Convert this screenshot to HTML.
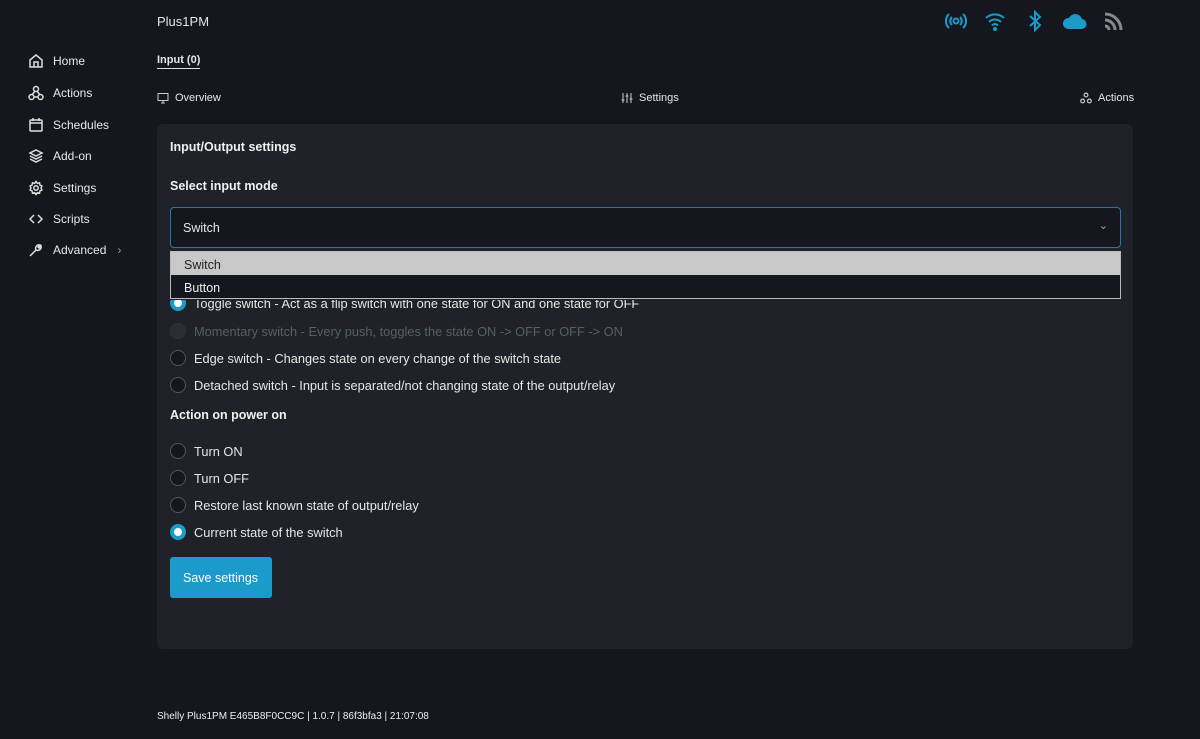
<!DOCTYPE html>
<html><head><meta charset="utf-8"><style>
*{box-sizing:border-box;margin:0;padding:0}
body{width:1200px;height:739px;background:#14181e;color:#e6e6e6;font-family:"Liberation Sans",sans-serif;font-size:12.5px;position:relative;overflow:hidden}
.a{position:absolute;white-space:nowrap}
.nav{left:28px;display:flex;align-items:center;gap:9px;font-size:12px;color:#e8e8e8}
.nav svg{width:16px;height:16px;stroke:#ddd;fill:none;stroke-width:1.5}
.card{left:157px;top:124px;width:976px;height:525px;background:#1f2329;border-radius:6px}
.h{font-weight:bold;font-size:12.5px;color:#f0f0f0}
.r{left:170px;display:flex;align-items:center;gap:8px;font-size:12.8px}
.r i{display:inline-block;width:16px;height:16px;border-radius:50%;border:1px solid #555;background:#14181e}
.r i.on{background:#fff;border:4px solid #1a9bcb}
.ic{stroke:#1a9bcb;fill:none;stroke-width:2}
</style></head><body>
<div class="a" style="left:157px;top:14px;font-size:13px">Plus1PM</div>
<svg class="a ic" style="left:945px;top:11px" width="22" height="20" viewBox="0 0 22 20"><circle cx="11" cy="10" r="2.5"/><path d="M7 6a5.5 5.5 0 0 0 0 8M15 6a5.5 5.5 0 0 1 0 8M4 3a9.5 9.5 0 0 0 0 14M18 3a9.5 9.5 0 0 1 0 14"/></svg>
<svg class="a ic" style="left:984px;top:11px" width="22" height="20" viewBox="0 0 22 20"><path d="M2 7a13 13 0 0 1 18 0M5 11a8.5 8.5 0 0 1 12 0M8 14.5a4 4 0 0 1 6 0"/><circle cx="11" cy="18" r="1" fill="#1a9bcb"/></svg>
<svg class="a ic" style="left:1027px;top:10px" width="16" height="22" viewBox="0 0 16 22"><path d="M3 6l10 9-5 5V2l5 5-10 9"/></svg>
<svg class="a" style="left:1062px;top:11px" width="25" height="19" viewBox="0 0 25 19"><path d="M6 18h13a5 5 0 0 0 1-10 7 7 0 0 0-13-1 5.5 5.5 0 0 0-1 11z" fill="#1a9bcb"/></svg>
<svg class="a" style="left:1104px;top:11px" width="20" height="20" viewBox="0 0 20 20" fill="none" stroke="#8a8a8a" stroke-width="3"><path d="M1 3a16 16 0 0 1 16 16M1 9a10 10 0 0 1 10 10M1 15a4 4 0 0 1 4 4"/></svg>

<div class="a nav" style="top:53px"><svg viewBox="0 0 16 16"><path d="M2 7l6-5 6 5v7H2zM6 14V9h4v5"/></svg>Home</div>
<div class="a nav" style="top:85px"><svg viewBox="0 0 16 16"><circle cx="8" cy="4" r="2.5"/><circle cx="3.5" cy="12" r="2.5"/><circle cx="12.5" cy="12" r="2.5"/><path d="M7 6l-3 4M9 6l3 4M6 12h4"/></svg>Actions</div>
<div class="a nav" style="top:117px"><svg viewBox="0 0 16 16"><rect x="2" y="3" width="12" height="11" rx="1"/><path d="M2 6h12M5 1v3M11 1v3"/></svg>Schedules</div>
<div class="a nav" style="top:148px"><svg viewBox="0 0 16 16"><path d="M8 2l6 3-6 3-6-3zM2 8l6 3 6-3M2 11l6 3 6-3"/></svg>Add-on</div>
<div class="a nav" style="top:180px"><svg viewBox="0 0 16 16"><circle cx="8" cy="8" r="2.2"/><path d="M8 1.5l1.3 1.8 2.2-.5.4 2.2 2 1L13 8l.9 2-2 1-.4 2.2-2.2-.5L8 14.5l-1.3-1.8-2.2.5-.4-2.2-2-1L3 8l-.9-2 2-1 .4-2.2 2.2.5z"/></svg>Settings</div>
<div class="a nav" style="top:211px"><svg viewBox="0 0 16 16"><path d="M6 4L2 8l4 4M10 4l4 4-4 4"/></svg>Scripts</div>
<div class="a nav" style="top:242px"><svg viewBox="0 0 16 16"><path d="M2 14l6-6a3.5 3.5 0 0 1 4-5l-2 2 1 1 2-2a3.5 3.5 0 0 1-5 4l-6 6z"/></svg>Advanced <span style="color:#999;margin-left:2px">›</span></div>

<div class="a" style="left:157px;top:54px;font-size:11px;font-weight:bold;border-bottom:1px solid #ddd;padding-bottom:2px">Input (0)</div>
<div class="a" style="left:157px;top:92px;font-size:11px;display:flex;gap:6px;align-items:center"><svg width="12" height="12" viewBox="0 0 12 12" fill="none" stroke="#ccc"><rect x="1" y="1.5" width="10" height="7"/><path d="M4 11h4M6 9v2"/></svg>Overview</div>
<div class="a" style="left:621px;top:92px;font-size:11px;display:flex;gap:6px;align-items:center"><svg width="12" height="12" viewBox="0 0 12 12" fill="none" stroke="#ccc"><path d="M2 1v10M6 1v10M10 1v10M0.5 8h3M4.5 4h3M8.5 7h3"/></svg>Settings</div>
<div class="a" style="left:1080px;top:92px;font-size:11px;display:flex;gap:6px;align-items:center"><svg width="12" height="12" viewBox="0 0 16 16" fill="none" stroke="#ccc" stroke-width="1.6"><circle cx="8" cy="4" r="2.5"/><circle cx="3.5" cy="12" r="2.5"/><circle cx="12.5" cy="12" r="2.5"/></svg>Actions</div>

<div class="a card"></div>
<div class="a h" style="left:170px;top:140px">Input/Output settings</div>
<div class="a h" style="left:170px;top:179px">Select input mode</div>
<div class="a" style="left:170px;top:207px;width:951px;height:41px;border:1px solid #1a7fa0;border-radius:4px;background:#14181e;padding:13px 12px;font-size:12.5px">Switch<span style="position:absolute;right:12px;top:11px;color:#aaa;font-size:11px">⌄</span></div>
<div class="a" style="left:170px;top:251px;width:951px;height:48px;border:1px solid #bbb;background:#14181e">
<div style="height:23px;background:#c8c8c8;color:#222;padding:6px 13px 0">Switch</div>
<div style="padding:6px 13px 0;color:#eee">Button</div></div>

<div class="a r" style="top:295px;clip-path:inset(5px 0 0 0)"><i class="on"></i>Toggle switch - Act as a flip switch with one state for ON and one state for OFF</div>
<div class="a r" style="top:323px;color:#5a5e63"><i style="border-color:#333;background:#2a2e33"></i>Momentary switch - Every push, toggles the state ON -&gt; OFF or OFF -&gt; ON</div>
<div class="a r" style="top:350px"><i></i>Edge switch - Changes state on every change of the switch state</div>
<div class="a r" style="top:377px"><i></i>Detached switch - Input is separated/not changing state of the output/relay</div>
<div class="a h" style="left:170px;top:408px">Action on power on</div>
<div class="a r" style="top:443px"><i></i>Turn ON</div>
<div class="a r" style="top:470px"><i></i>Turn OFF</div>
<div class="a r" style="top:497px"><i></i>Restore last known state of output/relay</div>
<div class="a r" style="top:524px"><i class="on"></i>Current state of the switch</div>
<div class="a" style="left:170px;top:557px;width:102px;height:41px;background:#1a9bcb;border-radius:3px;color:#fff;padding:14px 13px;font-size:12.5px">Save settings</div>

<div class="a" style="left:157px;top:711px;font-size:10px;color:#eee">Shelly Plus1PM E465B8F0CC9C | 1.0.7 | 86f3bfa3 | 21:07:08</div>
</body></html>
